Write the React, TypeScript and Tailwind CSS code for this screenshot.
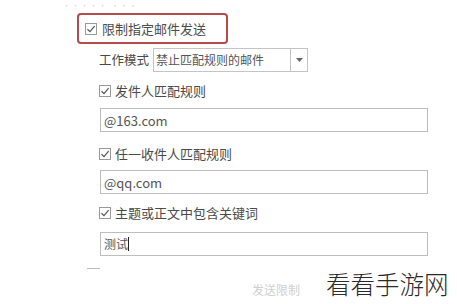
import React from "react";

const CheckBox = () => (
  <span className="w-[12px] h-[12px] border border-[#9a9a9a] bg-white flex items-center justify-center shrink-0">
    <svg width="10" height="10" viewBox="0 0 10 10">
      <path d="M1.5 5.2 L4 7.6 L8.6 2.2" fill="none" stroke="#555" strokeWidth="1.2" />
    </svg>
  </span>
);

const CheckRow = ({ label, mt }: { label: string; mt: string }) => (
  <div className={`flex items-center gap-[4px] ml-[99px] h-[16px] ${mt}`}>
    <CheckBox />
    <span className="text-[13px] leading-[16px] text-[#4a4a4a]">{label}</span>
  </div>
);

const Field = ({ value, mt, small }: { value: string; mt: string; small?: boolean }) => (
  <div
    className={`ml-[100px] w-[328px] h-[24px] border border-[#bdbdbd] flex items-center px-[3px] ${mt}`}
  >
    <span className={`${small ? "text-[12px]" : "text-[13px]"} text-[#555] leading-none`}>{value}</span>
    {small && <span className="w-[1px] h-[14px] bg-[#222]" />}
  </div>
);

const App = () => {
  return (
    <div
      className="w-[457px] h-[304px] bg-white overflow-hidden relative flex flex-col"
      style={{ fontFamily: '"Noto Sans CJK SC", "Noto Sans", sans-serif' }}
    >
      <div className="ml-[63px] mt-[1px] h-[8px] text-[7px] leading-[8px] text-[#d2d2d2] tracking-[2px]">
        ••••• •••
      </div>

      <div className="ml-[77px] mt-[4px] w-[151px] h-[31px] border-2 border-[#b94a4c] rounded-[4px] flex items-center gap-[5px] pl-[6px]">
        <CheckBox />
        <span className="text-[13px] leading-[16px] text-[#4a4a4a]">限制指定邮件发送</span>
      </div>

      <div className="flex items-center ml-[99px] mt-[4px] h-[24px] gap-[4px]">
        <span className="text-[12.5px] text-[#4a4a4a] leading-none">工作模式</span>
        <div className="w-[155px] h-[24px] border border-[#c4c4c4] flex">
          <span className="flex-1 flex items-center pl-[2px] text-[12px] text-[#555] leading-none">
            禁止匹配规则的邮件
          </span>
          <span className="w-[17px] border-l border-[#c4c4c4] flex items-center justify-center">
            <svg width="7" height="4" viewBox="0 0 7 4">
              <path d="M0 0 L7 0 L3.5 4 Z" fill="#666" />
            </svg>
          </span>
        </div>
      </div>

      <CheckRow label="发件人匹配规则" mt="mt-[11px]" />
      <Field value="@163.com" mt="mt-[9px]" />
      <CheckRow label="任一收件人匹配规则" mt="mt-[14px]" />
      <Field value="@qq.com" mt="mt-[8px]" />
      <CheckRow label="主题或正文中包含关键词" mt="mt-[11px]" />
      <Field value="测试" mt="mt-[11px]" small />

      <div className="ml-[87px] mt-[12px] w-[13px] h-[1px] bg-[#bbb]" />

      <div className="flex items-end mt-[1px]">
        <span className="ml-[252px] mb-[2px] text-[12px] leading-none text-[#cfcfcf]">发送限制</span>
        <span className="ml-[26px] text-[24.5px] leading-[28px] font-light text-[#2a2a2a]">
          看看手游网
        </span>
      </div>
    </div>
  );
};

export default App;
